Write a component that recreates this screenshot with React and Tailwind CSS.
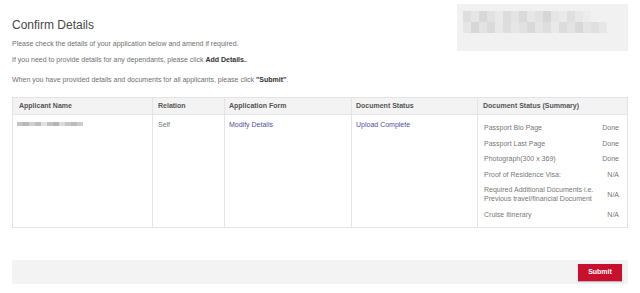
const mosaicTop = [
	'bg-[#dedede]', 'bg-[#e6e6e6]', 'bg-[#d8d8d8]', 'bg-[#e2e2e2]', 'bg-[#e9e9e9]', 'bg-[#dcdcdc]', 'bg-[#e4e4e4]',
	'bg-[#d9d9d9]', 'bg-[#e7e7e7]', 'bg-[#e1e1e1]', 'bg-[#d6d6d6]', 'bg-[#e5e5e5]', 'bg-[#eaeaea]', 'bg-[#dfdfdf]',
	'bg-[#e8e8e8]', 'bg-[#ececec]',
];
const mosaicBottom = [
	'bg-[#e6e6e6]', 'bg-[#d7d7d7]', 'bg-[#e3e3e3]', 'bg-[#dadada]', 'bg-[#e8e8e8]', 'bg-[#dddddd]', 'bg-[#e6e6e6]',
	'bg-[#e1e1e1]', 'bg-[#d9d9d9]', 'bg-[#e5e5e5]', 'bg-[#dedede]', 'bg-[#e9e9e9]', 'bg-[#dcdcdc]', 'bg-[#e3e3e3]',
	'bg-[#d8d8d8]', 'bg-[#e4e4e4]', 'bg-[#dfdfdf]', 'bg-[#e7e7e7]',
];
const nameMosaic = ['bg-[#c4c4c4]', 'bg-[#b8b8b8]', 'bg-[#d0d0d0]', 'bg-[#bdbdbd]', 'bg-[#e0e0e0]', 'bg-[#c2c2c2]', 'bg-[#b5b5b5]', 'bg-[#dadada]', 'bg-[#c6c6c6]', 'bg-[#bcbcbc]', 'bg-[#cbcbcb]'];

const summary = [
	{ label: 'Passport Bio Page', value: 'Done' },
	{ label: 'Passport Last Page', value: 'Done' },
	{ label: 'Photograph(300 x 369)', value: 'Done' },
	{ label: 'Proof of Residence Visa:', value: 'N/A' },
	{ label: ['Required Additional Documents i.e.', 'Previous travel/financial Document'], value: 'N/A' },
	{ label: 'Cruise Itinerary', value: 'N/A' },
];

const cols = 'grid grid-cols-[139px_72px_127px_126px_1fr]';

export default function App() {
	return (
		<div className="w-[640px] h-[293px] overflow-hidden bg-white px-[12px] font-['Liberation_Sans',Arial,sans-serif] text-[7px] text-[#6f6f6f]">
			<div className="flex justify-between items-start">
				<div>
					<h1 className="mt-[17px] text-[12px] leading-[16px] text-[#484848]">Confirm Details</h1>
					<p className="mt-[3px] leading-[16px]">Please check the details of your application below and amend if required.</p>
					<p className="leading-[16px]">
						If you need to provide details for any dependants, please click <b className="text-[#333]">Add Details.</b>.
					</p>
					<p className="mt-[4px] leading-[16px]">
						When you have provided details and documents for all applicants, please click <b className="text-[#333]">"Submit"</b>.
					</p>
				</div>
				<div className="mt-[4px] w-[171px] h-[47px] bg-[#f1f1f1] pt-[7px] pl-[6px]">
					<div className="flex blur-[0.4px]">
						{mosaicTop.map((c, i) => (
							<div key={i} className={`w-[8px] h-[11px] ${c}`} />
						))}
					</div>
					<div className="flex blur-[0.4px]">
						{mosaicBottom.map((c, i) => (
							<div key={i} className={`w-[8px] h-[11px] ${c}`} />
						))}
					</div>
				</div>
			</div>

			<div className="mt-[9px] border border-[#e4e4e4]">
				<div className={`${cols} h-[17px] bg-[#f3f3f3] border-b border-[#e4e4e4] font-bold text-[#555]`}>
					<div className="px-[6px] flex items-center">Applicant Name</div>
					<div className="px-[5px] flex items-center border-l border-[#e4e4e4]">Relation</div>
					<div className="px-[4px] flex items-center border-l border-[#e4e4e4]">Application Form</div>
					<div className="px-[4px] flex items-center border-l border-[#e4e4e4]">Document Status</div>
					<div className="px-[5px] flex items-center border-l border-[#e4e4e4]">Document Status (Summary)</div>
				</div>
				<div className={`${cols} h-[112px] leading-[9px]`}>
					<div className="px-[4px] pt-[7px]">
						<div className="flex blur-[0.5px]">
							{nameMosaic.map((c, i) => (
								<div key={i} className={`w-[6px] h-[4px] ${c}`} />
							))}
						</div>
					</div>
					<div className="px-[5px] pt-[5px] border-l border-[#e4e4e4] text-[#777]">Self</div>
					<div className="px-[4px] pt-[5px] border-l border-[#e4e4e4] text-[#4f4f9f]">Modify Details</div>
					<div className="px-[4px] pt-[5px] border-l border-[#e4e4e4] text-[#4f4f9f]">Upload Complete</div>
					<div className="pl-[6px] pr-[8px] pt-[5px] border-l border-[#e4e4e4] text-[#777]">
						{summary.map((row, i) => (
							<div key={i} className={`flex justify-between items-center ${Array.isArray(row.label) ? 'h-[24.5px]' : 'h-[15.5px]'}`}>
								<div>
									{Array.isArray(row.label)
										? row.label.map((l) => <div key={l}>{l}</div>)
										: row.label}
								</div>
								<div>{row.value}</div>
							</div>
						))}
					</div>
				</div>
			</div>

			<div className="mt-[32px] h-[24px] bg-[#f3f3f3] flex justify-end items-center pr-[6px]">
				<button className="w-[44px] h-[17px] bg-[#c8102e] text-white font-bold text-[7px] shadow-[0_1px_1px_rgba(0,0,0,0.25)]">
					Submit
				</button>
			</div>
		</div>
	);
}
